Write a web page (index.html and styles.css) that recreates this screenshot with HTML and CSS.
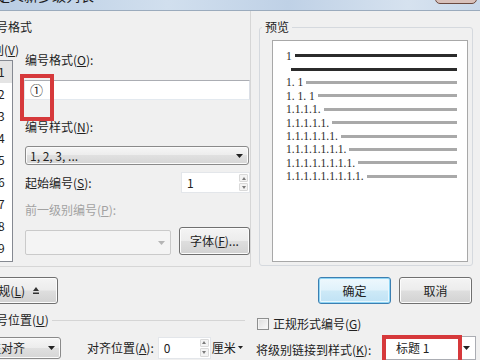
FILE: index.html
```html
<!DOCTYPE html>
<html lang="zh-CN">
<head>
  <meta charset="UTF-8">
  <title>定义新多级列表</title>
  <link rel="stylesheet" href="styles.css">
</head>
<body>

<div class="dialog">
  <div class="titlebar">
    <span class="title">定义新多级列表</span>
    <span class="close-btn"></span>
  </div>

  <div class="main">
    <!-- Left: numbering format -->
    <div class="format-panel">
      <div class="legend"><span class="cut">编号格式</span></div>
      <div class="format-body">
        <div class="level-col">
          <div class="level-label">别(<u>V</u>)</div>
          <ul class="level-list">
            <li class="selected">1</li>
            <li>2</li>
            <li>3</li>
            <li>4</li>
            <li>5</li>
            <li>6</li>
            <li>7</li>
            <li>8</li>
            <li>9</li>
          </ul>
        </div>
        <div class="fields">
          <div class="field-label first">编号格式(<u>O</u>):</div>
          <div class="text-box format-input">
            ①
            <span class="mark mark-format"></span>
          </div>

          <div class="field-label style-label">编号样式(<u>N</u>):</div>
          <div class="select style-select">
            <span>1, 2, 3, ...</span>
            <svg width="7" height="4" viewBox="0 0 7 4"><path d="M0 0h7L3.5 4z" fill="#222"/></svg>
          </div>

          <div class="start-row">
            <span>起始编号(<u>S</u>):</span>
            <div class="spin-box start-spin">
              <span class="spin-value">1</span>
              <span class="spin-buttons"><span class="spin-up"></span><span class="spin-down"></span></span>
            </div>
          </div>

          <div class="field-label prev-label">前一级别编号(<u>P</u>):</div>
          <div class="font-row">
            <div class="combo-disabled">
              <svg width="7" height="4" viewBox="0 0 7 4"><path d="M0 0h7L3.5 4z" fill="#b5b5b5"/></svg>
            </div>
            <button class="btn font-btn">字体(<u>F</u>)...</button>
          </div>
        </div>
      </div>
    </div>

    <!-- Right: preview -->
    <div class="preview-panel">
      <fieldset class="preview-group">
        <legend>预览</legend>
        <div class="preview-box">
          <div class="pv-row"><span>1</span><i class="bar dark"></i></div>
          <div class="pv-row"><i class="bar dark first-bar"></i></div>
          <div class="pv-row"><span>1. 1</span><i class="bar"></i></div>
          <div class="pv-row"><span>1. 1. 1</span><i class="bar"></i></div>
          <div class="pv-row"><span>1.1.1.1.</span><i class="bar"></i></div>
          <div class="pv-row"><span>1.1.1.1.1.</span><i class="bar"></i></div>
          <div class="pv-row"><span>1.1.1.1.1.1.</span><i class="bar"></i></div>
          <div class="pv-row"><span>1.1.1.1.1.1.1.</span><i class="bar"></i></div>
          <div class="pv-row"><span>1.1.1.1.1.1.1.1.</span><i class="bar"></i></div>
          <div class="pv-row"><span>1.1.1.1.1.1.1.1.1.</span><i class="bar"></i></div>
        </div>
      </fieldset>
    </div>
  </div>

  <div class="bottom">
    <button class="btn less-btn">
      <span>规(<u>L</u>)</span>
      <svg width="6" height="7" viewBox="0 0 6 7"><path d="M0 4L3 0l3 4z" fill="#333"/><rect y="5.5" width="6" height="1.5" fill="#333"/></svg>
    </button>
    <div class="actions">
      <button class="btn primary">确定</button>
      <button class="btn">取消</button>
    </div>

    <div class="pos-legend"><span>编号位置(<u>U</u>)</span></div>
    <label class="check-row">
      <span class="checkbox"></span>
      <span>正规形式编号(<u>G</u>)</span>
    </label>

    <div class="align-row">
      <div class="select align-select">
        <span>左对齐</span>
        <svg width="7" height="4" viewBox="0 0 7 4"><path d="M0 0h7L3.5 4z" fill="#222"/></svg>
      </div>
      <span class="align-label">对齐位置(<u>A</u>):</span>
      <div class="spin-box align-spin">
        <span class="spin-value">0</span>
        <span class="spin-buttons"><span class="spin-up"></span><span class="spin-down"></span></span>
      </div>
      <span class="unit">厘米</span>
      <svg width="5" height="3" viewBox="0 0 5 3"><path d="M0 0h5L2.5 3z" fill="#222"/></svg>
    </div>
    <div class="link-row">
      <span class="link-label">将级别链接到样式(<u>K</u>):</span>
      <div class="link-combo">
        <span>标题 1</span>
        <svg width="7" height="4" viewBox="0 0 7 4"><path d="M0 0h7L3.5 4z" fill="#222"/></svg>
        <span class="mark mark-link"></span>
      </div>
    </div>
  </div>
</div>

</body>
</html>
```

FILE: styles.css
```css
/* Page */
body {
  margin: 0;
  height: 360px;
  overflow: hidden;
}

.dialog {
  width: 480px;
  height: 360px;
  overflow: hidden;
  background-color: #f0f0f0;
  font-family: "Noto Sans CJK SC", "Liberation Sans", sans-serif;
  font-size: 12px;
  line-height: 14px;
  color: #222;
}

u {
  text-decoration: underline;
  text-underline-offset: 1px;
}

/* Title bar (cut off at the top) */
.titlebar {
  position: relative;
  height: 10px;
  overflow: hidden;
  background: linear-gradient(to right, #b9cde3, #d1dfee 35%, #bfd1e6 60%, #d6e2ef 85%, #c9d8ea);
  border-bottom: 1px solid #9babbd;
}

.title {
  display: block;
  margin: -12px 0 0 -4px;
  font-size: 14px;
  line-height: 14px;
  color: #1c1c1c;
}

.close-btn {
  position: absolute;
  right: 3px;
  top: -8px;
  width: 40px;
  height: 10px;
  border: 1px solid #6b4a40;
  border-radius: 0 0 5px 5px;
  background-color: #d8c1bb;
}

/* Top area */
.main {
  display: grid;
  grid-template-columns: 251px 1fr;
  height: 256px;
}

.format-panel {
  border-right: 1px solid #d6d6d6;
  border-bottom: 1px solid #d6d6d6;
}

.legend {
  padding-top: 9px;
  white-space: nowrap;
}

.cut {
  display: inline-block;
  margin-left: -16px;
}

.format-body {
  display: flex;
}

/* Level list, mostly off-screen */
.level-col {
  flex: none;
  width: 24px;
  margin-left: -11px;
}

.level-label {
  margin: 9px 0 0 3px;
  white-space: nowrap;
}

.level-list {
  box-sizing: border-box;
  height: 202px;
  margin: 3px 0 0;
  padding: 0;
  list-style: none;
  background-color: #fff;
  border: 1px solid #858991;
}

.level-list li {
  height: 22px;
  line-height: 22px;
  padding-left: 8px;
}

.level-list li.selected {
  background-color: #e4e4e4;
}

/* Fields */
.fields {
  width: 226px;
  margin-left: 11px;
}

.field-label {
  padding-left: 1px;
  white-space: nowrap;
}

.field-label.first {
  margin-top: 19px;
}

.text-box {
  position: relative;
  box-sizing: border-box;
  height: 20px;
  margin-top: 13px;
  padding-left: 5px;
  line-height: 18px;
  font-size: 13px;
  background-color: #fff;
  border: 1px solid;
  border-color: #abadb3 #dbdfe6 #e3e9ef #e2e3ea;
}

.mark {
  position: absolute;
  box-sizing: border-box;
  border: 4px solid #d6393b;
}

.mark-format {
  left: -5px;
  top: -7px;
  width: 34px;
  height: 47px;
}

.style-label {
  margin-top: 20px;
}

.select {
  box-sizing: border-box;
  display: flex;
  align-items: center;
  justify-content: space-between;
  border: 1px solid #8a8a8a;
  border-radius: 3px;
  background: linear-gradient(#f6f6f6, #ececec 50%, #e0e0e0 50%, #d6d6d6);
  box-shadow: inset 0 0 0 1px #fbfbfb;
  white-space: nowrap;
}

.style-select {
  width: 224px;
  height: 19px;
  margin: 12px 0 0 1px;
  padding: 0 5px 0 4px;
}

.start-row {
  display: flex;
  align-items: center;
  justify-content: space-between;
  height: 21px;
  margin-top: 7px;
  padding-left: 1px;
}

.spin-box {
  box-sizing: border-box;
  display: flex;
  align-items: center;
  background-color: #fff;
  border: 1px solid #e3e6ea;
}

.start-spin {
  width: 69px;
  height: 21px;
}

.spin-value {
  padding-left: 5px;
}

.spin-buttons {
  display: flex;
  flex-direction: column;
  gap: 1px;
  width: 10px;
  height: 100%;
  margin-left: auto;
  padding: 1px 1px 1px 0;
  box-sizing: border-box;
}

.spin-buttons span {
  flex: 1;
  display: flex;
  align-items: center;
  justify-content: center;
  background-color: #f3f3f3;
  border: 1px solid #d9d9d9;
  border-radius: 1px;
}

.spin-up::before,
.spin-down::before {
  content: "";
  border-left: 2px solid transparent;
  border-right: 2px solid transparent;
}

.spin-up::before {
  border-bottom: 3px solid #7a7a7a;
}

.spin-down::before {
  border-top: 3px solid #7a7a7a;
}

.prev-label {
  margin-top: 10px;
  color: #a2a2a2;
}

.font-row {
  display: flex;
  align-items: flex-start;
  margin-top: 10px;
}

.combo-disabled {
  box-sizing: border-box;
  display: flex;
  align-items: center;
  justify-content: flex-end;
  width: 146px;
  height: 25px;
  margin: 3px 0 0 1px;
  padding-right: 5px;
  background-color: #f4f4f4;
  border: 1px solid #cacaca;
  border-radius: 2px;
}

/* Buttons */
.btn {
  box-sizing: border-box;
  display: flex;
  align-items: center;
  justify-content: center;
  height: 27px;
  padding: 0;
  font: inherit;
  color: #222;
  border: 1px solid #707070;
  border-radius: 3px;
  background: linear-gradient(#f4f4f4, #ececec 48%, #dedede 52%, #d2d2d2);
  box-shadow: inset 0 0 0 1px #fcfcfc;
  white-space: nowrap;
}

.font-btn {
  width: 71px;
  height: 28px;
  margin-left: 8px;
}

/* Preview */
.preview-group {
  box-sizing: border-box;
  height: 246px;
  margin: 9px 7px 0 8px;
  padding: 0 0 3px 12px;
  border: 1px solid #d5d9de;
  border-radius: 3px;
  min-width: 0;
}

.preview-group legend {
  margin-left: -10px;
  padding: 0 3px;
  line-height: 14px;
}

.preview-box {
  box-sizing: border-box;
  width: 196px;
  height: 222px;
  margin-top: 6px;
  padding: 8px 10px 0 13px;
  background-color: #fff;
  border: 1px solid #a8a8a8;
}

.pv-row {
  display: flex;
  align-items: center;
  height: 13.4px;
  font-family: "Liberation Serif", serif;
  font-size: 11.5px;
  color: #2a2a2a;
  white-space: pre;
}

.bar {
  flex: 1;
  height: 3px;
  margin-left: 3px;
  background-color: #a9a9a9;
}

.bar.dark {
  background-color: #2b2b2b;
}

.bar.first-bar {
  margin-left: 5px;
}

/* Bottom area */
.bottom {
  display: grid;
  grid-template-columns: 251px 1fr;
  grid-template-rows: 27px 31px 25px;
  padding-top: 10px;
}

.less-btn {
  justify-content: flex-end;
  gap: 8px;
  width: 98px;
  margin-left: -40px;
  padding-right: 18px;
}

.actions {
  display: flex;
  gap: 8px;
  margin-left: 67px;
}

.actions .btn {
  width: 73px;
}

.btn.primary {
  border-color: #3c7fb1;
  background: linear-gradient(#eef8fd, #e0f2fb 48%, #cde9f7 52%, #bfe2f5);
  box-shadow: inset 0 0 0 1px #8fd5f5, inset 0 0 0 2px #e9f7fd;
}

.pos-legend {
  display: flex;
  align-items: center;
  margin-left: -16px;
  white-space: nowrap;
}

.pos-legend::after {
  content: "";
  flex: 1;
  height: 1px;
  margin: 1px 6px 0 3px;
  background-color: #d5d5d5;
}

.check-row {
  display: flex;
  align-items: center;
  align-self: start;
  gap: 4px;
  margin: 13px 0 0 6px;
}

.checkbox {
  box-sizing: border-box;
  width: 12px;
  height: 12px;
  border: 1px solid #8e8f8f;
  background: linear-gradient(135deg, #dcdcdc, #fbfbfb);
  box-shadow: inset 0 0 0 1px #f4f4f4;
}

.align-row {
  display: flex;
  align-items: center;
  white-space: nowrap;
}

.align-select {
  width: 92px;
  height: 22px;
  margin-left: -31px;
  padding: 0 5px 0 19px;
}

.align-label {
  margin-left: 26px;
}

.align-spin {
  width: 53px;
  height: 22px;
  margin-left: 4px;
}

.unit {
  margin: 0 2px 0 1px;
}

.link-row {
  display: flex;
  align-items: flex-start;
  white-space: nowrap;
}

.link-label {
  width: 127px;
  margin: 8px 0 0 5px;
}

.link-combo {
  position: relative;
  box-sizing: border-box;
  display: flex;
  align-items: center;
  justify-content: space-between;
  width: 93px;
  height: 24px;
  margin-top: 1px;
  padding: 0 5px 0 12px;
  background-color: #fff;
  border: 1px solid #abadb3;
}

.mark-link {
  left: -2px;
  top: -2px;
  width: 80px;
  height: 30px;
}
```
